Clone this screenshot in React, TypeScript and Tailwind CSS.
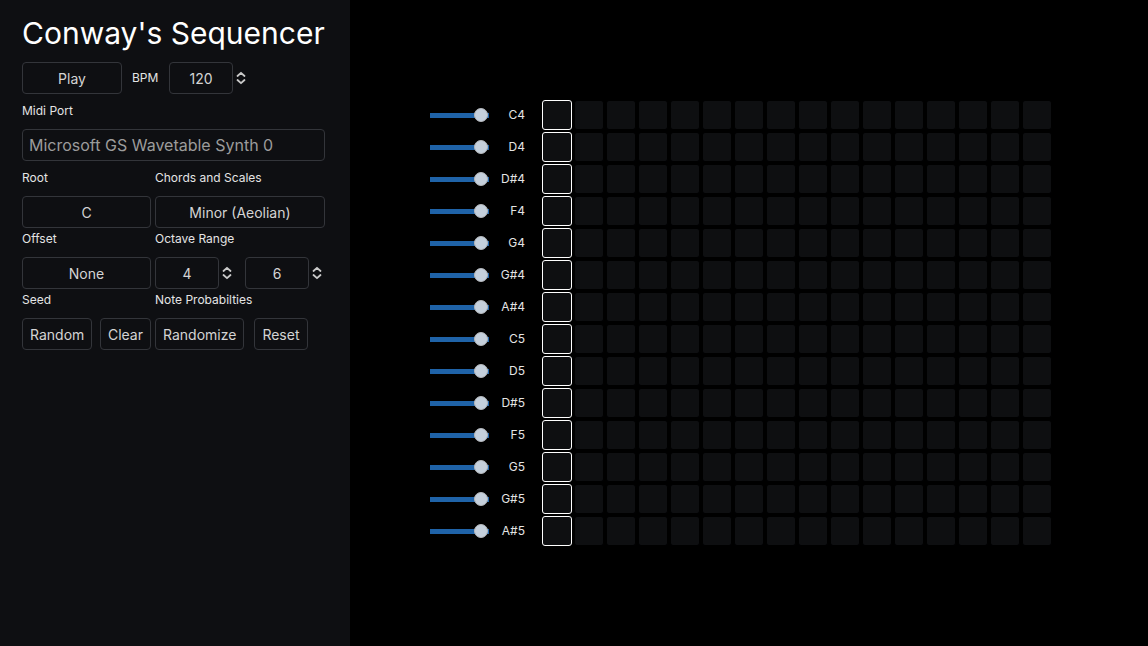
import React from "react";

const NOTES = ["C4", "D4", "D#4", "F4", "G4", "G#4", "A#4", "C5", "D5", "D#5", "F5", "G5", "G#5", "A#5"];
const STEPS = 16;

const font = { fontFamily: "Inter, 'Liberation Sans', sans-serif" };

function Spinner() {
  return (
    <svg width="10" height="14" viewBox="0 0 10 14" fill="none" stroke="#c9c9c9" strokeWidth="1.8" strokeLinecap="round" strokeLinejoin="round">
      <path d="M1.5 5 L5 1.8 L8.5 5" />
      <path d="M1.5 9 L5 12.2 L8.5 9" />
    </svg>
  );
}

function NumberBox({ value }: { value: string }) {
  return (
    <div className="flex items-center">
      <div className="w-[64px] h-[32px] border border-[#33353a] rounded-[4px] flex items-center justify-center text-[14px] text-[#d4d4d4]">
        {value}
      </div>
      <div className="ml-[3px] w-[23px] flex items-center">
        <Spinner />
      </div>
    </div>
  );
}

function Box({ children, className = "" }: { children: React.ReactNode; className?: string }) {
  return (
    <div className={`h-[32px] border border-[#33353a] rounded-[4px] flex items-center justify-center text-[14px] text-[#d4d4d4] ${className}`}>
      {children}
    </div>
  );
}

function Label({ children, top }: { children: React.ReactNode; top: string }) {
  return <div className={`${top} pb-[9px] leading-[18px] text-[12px] text-[#e4e4e4]`}>{children}</div>;
}

function NoteRow({ note }: { note: string }) {
  return (
    <div className="flex items-center h-[32px]">
      <div className="relative w-[60px] h-[14px] flex items-center">
        <div className="w-[59px] h-[5px] bg-[#1f63a8]" />
        <div className="absolute left-[44px] top-0 w-[14px] h-[14px] rounded-full bg-[#c5d0dc] border border-[#b4b7bb]" />
      </div>
      <div className="w-[35px] text-right text-[12px] text-[#e4e4e4]">{note}</div>
      <div className="ml-[16px] flex">
        {Array.from({ length: STEPS }).map((_, i) => (
          <div
            key={i}
            className={`m-[1px] w-[30px] h-[30px] rounded-[3px] bg-[#0e0f11] border-[1.5px] ${i === 0 ? "border-white" : "border-black"}`}
          />
        ))}
      </div>
    </div>
  );
}

export default function App() {
  return (
    <div className="flex w-[1148px] h-[646px] bg-black overflow-hidden" style={font}>
      <aside className="w-[350px] h-full bg-[#0e0f12] pl-[22px] pt-[14px]">
        <h1 className="text-[30px] leading-[38px] text-white">Conway's Sequencer</h1>

        <div className="mt-[10px] flex items-center">
          <Box className="w-[100px]">Play</Box>
          <span className="ml-[10px] w-[37px] text-[12px] text-[#e4e4e4]">BPM</span>
          <NumberBox value="120" />
        </div>

        <Label top="pt-[8px]">Midi Port</Label>
        <div className="w-[303px] h-[32px] border border-[#33353a] rounded-[4px] flex items-center pl-[6px] text-[16px] text-[#9c9c9c]">
          Microsoft GS Wavetable Synth 0
        </div>

        <div className="grid grid-cols-[129px_170px] gap-x-[4px]">
          <Label top="pt-[8px]">Root</Label>
          <Label top="pt-[8px]">Chords and Scales</Label>
          <Box>C</Box>
          <Box>Minor (Aeolian)</Box>

          <Label top="pt-[2px]">Offset</Label>
          <Label top="pt-[2px]">Octave Range</Label>
          <Box>None</Box>
          <div className="flex">
            <NumberBox value="4" />
            <NumberBox value="6" />
          </div>

          <Label top="pt-[2px]">Seed</Label>
          <Label top="pt-[2px]">Note Probabilties</Label>
          <div className="flex justify-between">
            <Box className="px-[7px]">Random</Box>
            <Box className="px-[7px]">Clear</Box>
          </div>
          <div className="flex gap-[10px]">
            <Box className="px-[7px]">Randomize</Box>
            <Box className="px-[7px]">Reset</Box>
          </div>
        </div>
      </aside>

      <main className="flex-1 flex flex-col justify-center pl-[80px]">
        {NOTES.map((n) => (
          <NoteRow key={n} note={n} />
        ))}
      </main>
    </div>
  );
}
